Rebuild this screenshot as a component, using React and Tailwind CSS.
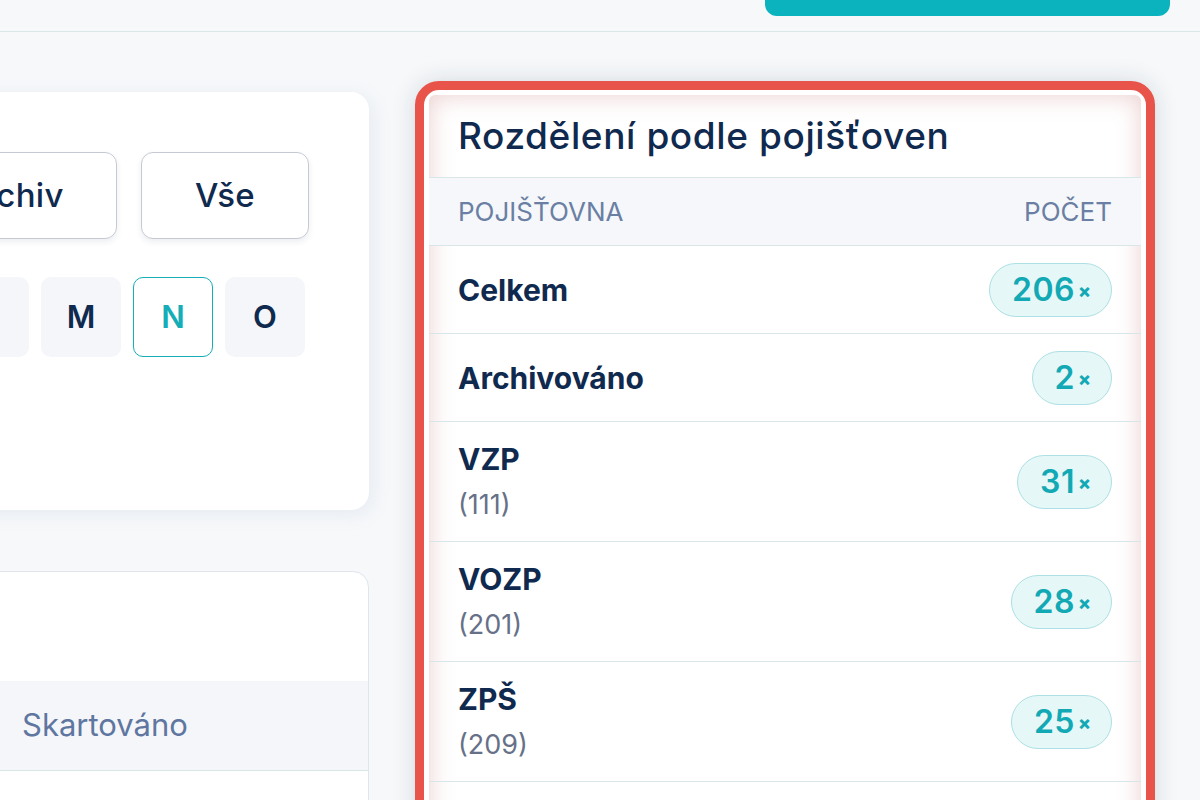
import React from 'react';

const rows = [
    { name: 'Celkem', count: 206 },
    { name: 'Archivováno', count: 2 },
    { name: 'VZP', code: '111', count: 31 },
    { name: 'VOZP', code: '201', count: 28 },
    { name: 'ZPŠ', code: '209', count: 25 },
    { name: 'ČPZP', code: '205', count: 22 },
];

const letters = ['K', 'L', 'M', 'N', 'O'];

function Badge({ count }) {
    return (
        <span className="inline-flex items-center h-[54px] pl-[22px] pr-[20px] rounded-full bg-[#e6f7f8] border-[1.5px] border-[#ade0e4] text-[#12a9b5] font-semibold">
            <span className="text-[32px] leading-none tracking-[0.5px]">{count}</span>
            <span className="text-[19px] leading-none ml-[3px] mt-[3px] font-extrabold">×</span>
        </span>
    );
}

export default function App() {
    return (
        <div
            className="w-[1200px] h-[800px] overflow-hidden bg-[#f6f8fa] text-[#0f2a4e]"
            style={{ fontFamily: 'Inter, "Noto Sans", sans-serif' }}
        >
            {/* Horní lišta */}
            <div className="h-[32px] border-b border-[#d9e6e8] flex justify-end pr-[30px]">
                <div className="w-[405px] h-[40px] -mt-[24px] bg-[#0ab3bd] rounded-[12px]" />
            </div>

            <div className="flex items-start">
                {/* Levý sloupec */}
                <div className="w-[409px] -ml-[40px] shrink-0 pt-[60px]">
                    <div className="bg-white rounded-[18px] shadow-[4px_4px_18px_rgba(148,163,190,0.15)] pt-[60px] pb-[153px] overflow-hidden">
                        <div className="flex justify-end gap-[24px] pr-[60px]">
                            <button className="w-[210px] h-[87px] shrink-0 rounded-[12px] border-[1.5px] border-[#c6c9d3] bg-white shadow-[0_3px_6px_rgba(15,42,78,0.08)] text-[33px] font-medium tracking-[0.3px]">
                                Archiv
                            </button>
                            <button className="w-[168px] h-[87px] shrink-0 rounded-[12px] border-[1.5px] border-[#c6c9d3] bg-white shadow-[0_3px_6px_rgba(15,42,78,0.08)] text-[33px] font-medium tracking-[0.3px]">
                                Vše
                            </button>
                        </div>
                        <div className="flex justify-end gap-[12px] pr-[64px] mt-[38px]">
                            {letters.map((l) => (
                                <div
                                    key={l}
                                    className={
                                        l === 'N'
                                            ? 'w-[80px] h-[80px] shrink-0 rounded-[10px] border-[1.5px] border-[#14adb8] bg-white text-[#14adb8] flex items-center justify-center text-[31px] font-semibold'
                                            : 'w-[80px] h-[80px] shrink-0 rounded-[10px] bg-[#f4f6f9] flex items-center justify-center text-[31px] font-semibold'
                                    }
                                >
                                    {l}
                                </div>
                            ))}
                        </div>
                    </div>

                    <div className="mt-[61px] bg-white rounded-[16px] border border-[#dfe5ea] h-[300px] overflow-hidden">
                        <div className="h-[109px]" />
                        <div className="h-[90px] bg-[#f4f6f9] border-b border-[#d9e6e8] flex items-center pl-[61px] text-[31px] text-[#5f76a0]">
                            Skartováno
                        </div>
                    </div>
                </div>

                {/* Pravý sloupec – zvýrazněná karta */}
                <div className="ml-[46px] mt-[49px] w-[740px] shrink-0 rounded-[24px] border-[9px] border-[#e8534a] bg-white p-[5px] shadow-[0_0_24px_rgba(30,40,60,0.14)]">
                    <div className="bg-white rounded-[6px] shadow-[inset_0_0_24px_rgba(190,90,90,0.3)] overflow-hidden">
                        <div className="h-[83px] flex items-center px-[29px] border-b border-[#d9e6e8]">
                            <h2 className="text-[37px] font-medium tracking-[0.6px]">Rozdělení podle pojišťoven</h2>
                        </div>
                        <div className="h-[68px] bg-[#f5f7fa] flex items-center justify-between pl-[29px] pr-[29px] border-b border-[#d9e6e8] text-[26px] text-[#6a7fa3] uppercase">
                            <span>Pojišťovna</span>
                            <span>Počet</span>
                        </div>
                        {rows.map((r) => (
                            <div
                                key={r.name}
                                className={
                                    r.code
                                        ? 'h-[120px] flex items-center justify-between pl-[29px] pr-[29px] border-b border-[#d9e6e8]'
                                        : 'h-[88px] flex items-center justify-between pl-[29px] pr-[29px] border-b border-[#d9e6e8]'
                                }
                            >
                                <div>
                                    <div className="text-[30px] font-bold leading-[36px]">{r.name}</div>
                                    {r.code && (
                                        <div className="text-[27px] text-[#667189] leading-[36px] mt-[10px]">({r.code})</div>
                                    )}
                                </div>
                                <Badge count={r.count} />
                            </div>
                        ))}
                    </div>
                </div>
            </div>
        </div>
    );
}
